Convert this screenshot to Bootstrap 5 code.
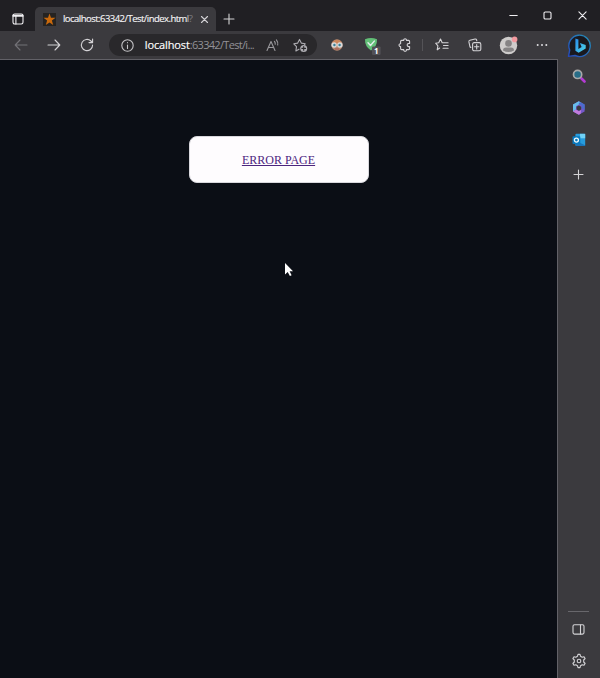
<!DOCTYPE html>
<html lang="en">
<head>
<meta charset="utf-8">
<meta name="viewport" content="width=device-width, initial-scale=1">
<title>Error page</title>
<link href="https://cdn.jsdelivr.net/npm/bootstrap@5.3.0/dist/css/bootstrap.min.css" rel="stylesheet">
<style>
body{background:#3b3a3e;font-family:"Open Sans","Noto Sans",sans-serif;color:#d4d3d6;cursor:default}
svg{display:block;fill:none;stroke:currentColor;stroke-width:1.1;stroke-linecap:round;stroke-linejoin:round}
svg.solid{stroke:none}
.title-bar{height:31px;background:#201f23}
.workspace-btn{width:35px;padding-top:7px;color:#f0eff2}
.page-tab{width:181px;height:24px;background:#3b3a3e;border-radius:5px 5px 0 0;padding-left:8px;padding-right:7px}
.tab-icon{width:13px;height:13px;background:#252321}
.tab-title{width:133px;margin-left:7px;font-size:9.5px;line-height:14px;letter-spacing:-.53px;color:#f3f2f4;-webkit-text-stroke:.15px currentColor}
.tab-title .fade-1{color:#b5b4b8}
.tab-title .fade-2{color:#77767b}
.tab-plus{width:26px;padding-top:7px}
.win-btn{width:34.7px;color:#f0eff2}
.tool-bar{height:28px;padding-left:4px}
.slot{width:33.6px;height:28px;flex:none;display:flex;align-items:center;justify-content:center}
.slot-reload{width:32.6px}
.url-pill{width:208px;height:22px;background:#29282b;margin:0 3.8px 0 5px;padding:0 9px 0 12px}
.url-text{font-size:11px;line-height:16px;width:112px;margin-left:11px;color:#929196;letter-spacing:-.68px}
.url-text b{font-weight:400;color:#fff;letter-spacing:-.13px;-webkit-text-stroke:.15px #fff}
.read-aloud{margin-left:9px}
.tool-sep{width:1px;height:12px;background:#545357;margin-left:1px;margin-right:1.4px}
.bing-slot{width:40px;height:28px}
.viewport-pane{width:558px;background:#0b0e15;border-top:1px solid #626167;border-right:1px solid #626167;padding-top:76px}
.error-card{width:180px;height:47px;background:#fefcfe;border:1px solid #d8d7dc;border-radius:8px}
.error-card a{font-family:"Liberation Serif",serif;font-size:12px;line-height:18px;color:#4c257e}
.side-bar{width:41px;padding-top:10px;padding-bottom:9px}
.app-links{gap:18px}
.add-link{margin-top:22px}
.side-rule{width:21px;height:1px;background:#68676c;margin-bottom:11px}
.side-gear{margin-top:17px}
.pointer{position:absolute;left:284px;top:262px}
</style>
<script src="https://cdn.jsdelivr.net/npm/bootstrap@5.3.0/dist/js/bootstrap.bundle.min.js"></script>
</head>
<body class="vh-100 overflow-hidden d-flex flex-column">
<header class="title-bar d-flex flex-shrink-0">
  <div class="workspace-btn d-flex align-items-center justify-content-center">
    <svg width="12" height="12" viewBox="0 0 12 12"><rect x="1" y="1" width="10" height="10" rx="1.7"/><path d="M1 2.3h10M1 3.1h10M3.9 3.5V11"/></svg>
  </div>
  <div class="page-tab d-flex align-items-center align-self-end">
    <div class="tab-icon flex-shrink-0"><svg class="solid" width="13" height="13" viewBox="0 0 13 13"><path fill="#c9690c" d="M6.5.5 8 4.8h4.5L8.9 7.6l1.3 4.4-3.7-2.6L2.8 12l1.3-4.4L.5 4.8H5z"/></svg></div>
    <div class="tab-title text-nowrap flex-shrink-0">localhost:63342/Test/index.htm<span class="fade-1">l</span><span class="fade-2">?</span></div>
    <svg class="ms-auto" width="9" height="9" viewBox="0 0 9 9"><path d="m1.5 1.5 6 6m0-6-6 6"/></svg>
  </div>
  <div class="tab-plus d-flex align-items-center justify-content-center"><svg width="12" height="12" viewBox="0 0 12 12"><path d="M6 1v10M1 6h10"/></svg></div>
  <div class="d-flex align-items-center ms-auto">
    <div class="win-btn d-flex justify-content-center"><svg width="9" height="9" viewBox="0 0 9 9"><path d="M.8 4.5h7.4"/></svg></div>
    <div class="win-btn d-flex justify-content-center"><svg width="9" height="9" viewBox="0 0 9 9"><rect x="1" y="1" width="7" height="7" rx="1.3"/></svg></div>
    <div class="win-btn d-flex justify-content-center"><svg width="9" height="9" viewBox="0 0 9 9"><path d="m.9.9 7.2 7.2m0-7.2L.9 8.1"/></svg></div>
  </div>
</header>
<nav class="tool-bar d-flex align-items-center flex-shrink-0">
  <div class="slot"><svg width="14" height="12" viewBox="0 0 14 12"><path stroke="#737277" d="M13 6H1.2M6 1 1.2 6 6 11"/></svg></div>
  <div class="slot"><svg width="14" height="12" viewBox="0 0 14 12"><path d="M1 6h11.8M8 1l4.8 5L8 11"/></svg></div>
  <div class="slot slot-reload"><svg width="14" height="14" viewBox="0 0 14 14"><path d="M12.6 7A5.6 5.6 0 1 1 10.9 3l1.6 1.5M12.6 1v3.6H9"/></svg></div>
  <div class="url-pill rounded-pill d-flex align-items-center flex-shrink-0">
    <svg class="flex-shrink-0" width="13" height="13" viewBox="0 0 13 13" color="#c6c5c8"><circle cx="6.5" cy="6.5" r="5.7"/><path d="M6.5 6v3.4M6.5 3.6v.2"/></svg>
    <div class="url-text text-nowrap flex-shrink-0"><b>localhost</b>:63342/Test/i...</div>
    <svg class="read-aloud flex-shrink-0" width="14" height="13" viewBox="0 0 14 13" color="#99989c"><path d="m1 11.5 4-9 4 9M2.4 8.5h5.2M8.4 2.3q1.1 1.2.8 3M10.4.8q2 2.4 1.3 5.2"/></svg>
    <svg class="ms-auto flex-shrink-0" width="15" height="15" viewBox="0 0 15 15" color="#acabb0"><path d="m6 11.2-3.1 1.7.6-4.2L.8 5.8l3.9-.7L6.5 1.4l1.8 3.7 3.9.7-.8.8"/><circle cx="10.7" cy="10.4" r="3.5" fill="#acabb0" stroke="none"/><path stroke="#29282b" d="M10.7 8.6v3.6m-1.8-1.8h3.6"/></svg>
  </div>
  <div class="slot"><svg class="solid" width="14" height="14" viewBox="0 0 14 14"><circle cx="7" cy="7" r="5.7" fill="#b98a70"/><path fill="#cb855a" d="M2 4.6Q6.8-1.2 12 4.6L10 6H4z"/><circle cx="4.1" cy="7" r="2.7" fill="#d8d9db"/><circle cx="9.9" cy="7" r="2.7" fill="#d8d9db"/><circle cx="4.4" cy="7" r="1.2" fill="#3c8094"/><circle cx="9.6" cy="7" r="1.2" fill="#3c8094"/><path stroke="#a45352" d="M5.2 11h3.6"/></svg></div>
  <div class="slot"><svg class="solid overflow-visible" width="18" height="18" viewBox="0 0 18 18"><path fill="#62bf77" d="M3 3.2Q9 .6 15 3.2q.3 7.2-6 11.4Q2.7 10.4 3 3.2z"/><path stroke="#e5f0ee" stroke-width="1.4" fill="none" d="m6 6.8 2.5 2.7 3.8-4.4"/><rect x="10" y="10.4" width="8.6" height="8.6" rx="1.2" fill="#525156"/><text x="14.3" y="17.8" text-anchor="middle" font-size="8" font-weight="700" fill="#fff">1</text></svg></div>
  <div class="slot"><svg width="14" height="14" viewBox="0 0 14 14"><path d="M3.6 2.4h2.1c-.2-2.1 3-2.1 2.8 0h2.1q1 0 1 1v2c-3.2-.5-3.2 3.7 0 3.2v2q0 1-1 1H8.5c.2 2.1-3 2.1-2.8 0H3.6q-1 0-1-1V8.5c-2.1.2-2.1-3 0-2.8V3.4q0-1 1-1z"/></svg></div>
  <div class="tool-sep flex-shrink-0"></div>
  <div class="slot"><svg width="14" height="14" viewBox="0 0 14 14"><path d="m4.7 10-2.5 1.8.7-4L.7 5.2l3-.5L5.5 1l1.7 3.7h5.9M8.5 7.5h4.6M8 10.3h5.1"/></svg></div>
  <div class="slot"><svg width="14" height="14" viewBox="0 0 14 14"><rect x="4.6" y="4.6" width="8.2" height="8.2" rx="1.6"/><path d="M8.7 6.5v4.4M6.5 8.7h4.4M2.9 9.5q-.8-.2-1-1L.9 3.9q-.2-1.3 1-1.6L7.1 1q1.2-.2 1.5 1l.2.8"/></svg></div>
  <div class="slot"><svg class="solid" width="19" height="19" viewBox="0 0 19 19"><circle cx="9.5" cy="9.5" r="8.7" fill="#cecccb"/><circle cx="9.5" cy="7.4" r="3.3" fill="#858384"/><path fill="#858384" d="M4 14.5q0-3 3-3h5q3 0 3 3-5.5 3-11 0z"/><circle cx="15.6" cy="3.4" r="2.8" fill="#f29aa0"/></svg></div>
  <div class="slot"><svg class="solid" width="12" height="4" viewBox="0 0 12 4"><g fill="#dedde0"><circle cx="1.7" cy="2" r="1"/><circle cx="6" cy="2" r="1"/><circle cx="10.3" cy="2" r="1"/></g></svg></div>
  <div class="bing-slot d-flex align-items-center justify-content-center flex-shrink-0">
    <svg width="25" height="25" viewBox="0 0 25 25"><defs><linearGradient id="bubble" x1="0" y1="1" x2="1" y2="0"><stop stop-color="#2548b9"/><stop offset="1" stop-color="#258fb6"/></linearGradient><linearGradient id="bing" x2="1" y2="1"><stop stop-color="#278bea"/><stop offset="1" stop-color="#50d6e7"/></linearGradient></defs><path fill="#19191f" stroke="url(#bubble)" stroke-width="1.4" d="M1.5 23.4 2.7 17A10.7 10.7 0 1 1 8 22.5z"/><path fill="url(#bing)" stroke="none" d="m8.4 5.4 3 1.2v9.3l3.2-1.8-1.7-4.2 5.8 2.2v3.3l-7.1 4.3-3.2-2z"/></svg>
  </div>
</nav>
<main class="d-flex flex-grow-1">
  <section class="viewport-pane d-flex justify-content-center align-items-start flex-shrink-0">
    <div class="error-card d-flex align-items-center justify-content-center"><a href="#">ERROR PAGE</a></div>
  </section>
  <aside class="side-bar d-flex flex-column align-items-center">
    <div class="app-links d-flex flex-column">
      <svg width="14" height="14" viewBox="0 0 14 14"><path stroke="#b43bd4" stroke-width="2.6" d="m9.5 9.5 3 3"/><circle cx="5.6" cy="5.4" r="4.1" fill="#286d87" stroke="#aaa9a8" stroke-width="1.7"/></svg>
      <svg class="solid" width="14" height="14" viewBox="0 0 14 14"><path fill="#7558c9" d="m6.8.3 5.8 3.3v6.8l-5.8 3.4L1 10.4V3.6z"/><path fill="#67bce9" d="M6.8.3 1 3.6v6.8l3-1.8V5.2l5.5-3.3z"/><path fill="#496dcc" d="m8 .9 4.6 2.7v5.3L9.7 7V4.6L6.5 3z"/><path fill="#c17bdd" d="M1 10.4 4 8.6l3 1.7 2.2-1.2-.6 3.7-1.8 1z"/><path fill="#3b3a3e" d="m6.9 4.5 2.3 1.3v2.7L6.9 9.8 4.6 8.5V5.8z"/></svg>
      <svg class="solid" width="14" height="14" viewBox="0 0 14 14"><rect x="3.4" y=".8" width="9.8" height="12.2" rx="1" fill="#279cdd"/><path fill="#70d2f7" d="M8 .8h5.2v4.5H8z"/><path fill="#1975bb" d="m4 8 9.2 4.2v.8H4z"/><rect x=".5" y="3.2" width="7.8" height="7.8" rx=".8" fill="#087abf"/><circle cx="4.4" cy="7.1" r="2" fill="none" stroke="#f0faff" stroke-width="1.3"/></svg>
    </div>
    <svg class="add-link" width="11" height="11" viewBox="0 0 11 11"><path d="M5.5 1v9M1 5.5h9"/></svg>
    <div class="side-rule mt-auto"></div>
    <svg width="13" height="13" viewBox="0 0 13 13"><rect x="1" y="1.7" width="11" height="9.4" rx="1.5"/><path d="M8.5 2v9"/></svg>
    <svg class="side-gear" width="16" height="16" viewBox="0 0 16 16"><path d="m6.5 3.2.5-1.8h2l.5 1.8 1.7 1 1.8-.5 1.1 1.8L12.7 7v2l1.4 1.5-1.1 1.8-1.8-.5-1.7 1-.5 1.8H7l-.5-1.8-1.7-1-1.8.5-1.1-1.8L3.3 9V7L1.9 5.5 3 3.7l1.8.5z"/><circle cx="8" cy="8" r="1.8"/></svg>
  </aside>
</main>
<svg class="pointer" width="10" height="15" viewBox="0 0 10 15"><path fill="#fff" stroke="none" d="M1 1v11.5l2.7-2.6L5.9 14l1.7-.8-2-4H9z"/></svg>
</body>
</html>
